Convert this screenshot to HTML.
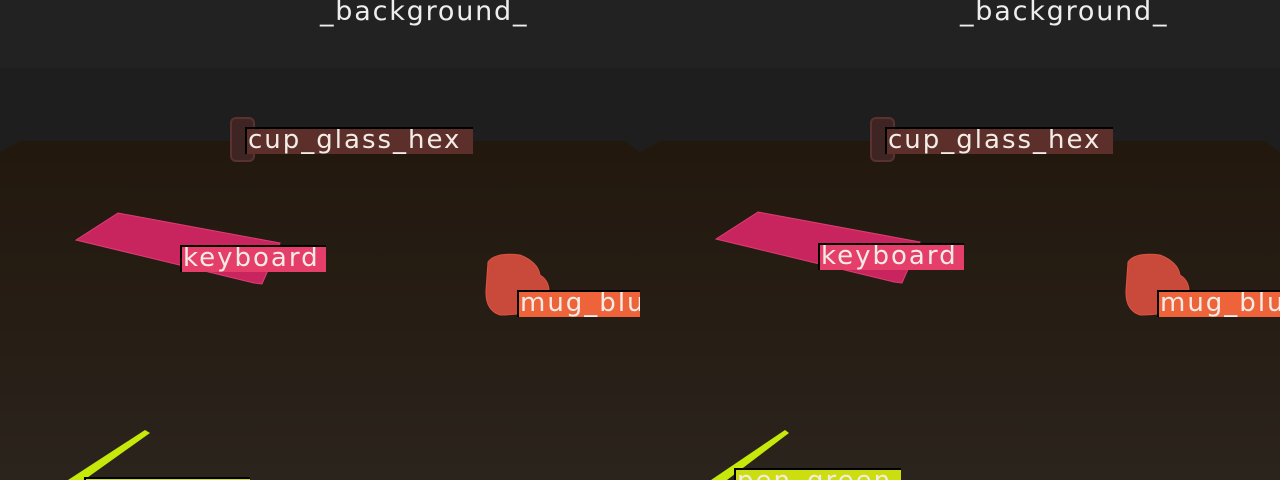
<!DOCTYPE html>
<html><head><style>
body{margin:0;width:1280px;height:480px;overflow:hidden;background:#1e1e1e;position:relative;font-family:"DejaVu Sans","Liberation Sans",sans-serif}
.half{position:absolute;top:0;width:640px;height:480px;overflow:hidden}
.hdr{position:absolute;left:0;top:0;width:640px;height:68px;background:#222}
.title{position:absolute;left:320px;top:-3px;color:#eee;font-size:27px;line-height:30px;letter-spacing:1.8px}
.lbl{position:absolute;height:27px;color:#f3ece6;font-size:26px;line-height:22px;padding-left:1px;white-space:nowrap;overflow:hidden;letter-spacing:2px;border-left:2px solid #000;border-top:2px solid #000;box-sizing:border-box}
</style></head><body>
<svg width="0" height="0" style="position:absolute"><defs><linearGradient id="t" x1="0" y1="0" x2="0" y2="1"><stop offset="0" stop-color="#22180e"/><stop offset="0.5" stop-color="#261d14"/><stop offset="1" stop-color="#2b241d"/></linearGradient></defs></svg>
<div class="half" style="left:0">
<svg width="640" height="480" style="position:absolute;left:0;top:0">
<polygon points="0,152 20,141 625,141 640,152 640,480 0,480" fill="url(#t)"/>
<rect x="231" y="118" width="23" height="43" rx="5" fill="#3e2422" stroke="#5a3230" stroke-width="2"/>
<polygon points="76,240 118,213 280,243 262,284 254,283" fill="#c8255f" stroke="#e03c72"/>
<path d="M488,262 Q495,252 520,255 Q538,262 540,275 Q552,282 548,300 Q535,315 500,315 Q485,310 486,290Z" fill="#c94a3a" stroke="#d85540"/>
<path d="M68,480 L145,430 L150,433 L84,480Z" fill="#c6e80a"/>
</svg>
<div class="hdr"><div class="title">_background_</div></div>
<div class="lbl" style="left:245px;top:127px;width:228px;background:#5d2f2b">cup_glass_hex</div>
<div class="lbl" style="left:180px;top:245px;width:146px;background:#e63e6a">keyboard</div>
<div class="lbl" style="left:517px;top:290px;width:123px;background:#ee6339">mug_blue</div>
<div class="lbl" style="left:84px;top:477px;width:166px;background:#ccde10">pen_green</div>
</div>
<div class="half" style="left:640px">
<svg width="640" height="480" style="position:absolute;left:0;top:0">
<polygon points="0,152 20,141 625,141 640,152 640,480 0,480" fill="url(#t)"/>
<g transform="translate(-640,0)">
<rect x="871" y="118" width="23" height="43" rx="5" fill="#3e2422" stroke="#5a3230" stroke-width="2"/>
<polygon points="716,239 758,212 920,242 902,283 894,282" fill="#c8255f" stroke="#e03c72"/>
<path d="M1128,262 Q1135,252 1160,255 Q1178,262 1180,275 Q1192,282 1188,300 Q1175,315 1140,315 Q1125,310 1126,290Z" fill="#c94a3a" stroke="#d85540"/>
<path d="M711,480 L785,430 L789,433 L727,480Z" fill="#c6e80a"/>
</g>
</svg>
<div class="hdr"><div class="title">_background_</div></div>
<div class="lbl" style="left:245px;top:127px;width:228px;background:#5d2f2b">cup_glass_hex</div>
<div class="lbl" style="left:178px;top:243px;width:146px;background:#e63e6a">keyboard</div>
<div class="lbl" style="left:517px;top:290px;width:123px;background:#ee6339">mug_blue</div>
<div class="lbl" style="left:94px;top:468px;width:167px;background:#ccde10">pen_green</div>
</div>
</body></html>
